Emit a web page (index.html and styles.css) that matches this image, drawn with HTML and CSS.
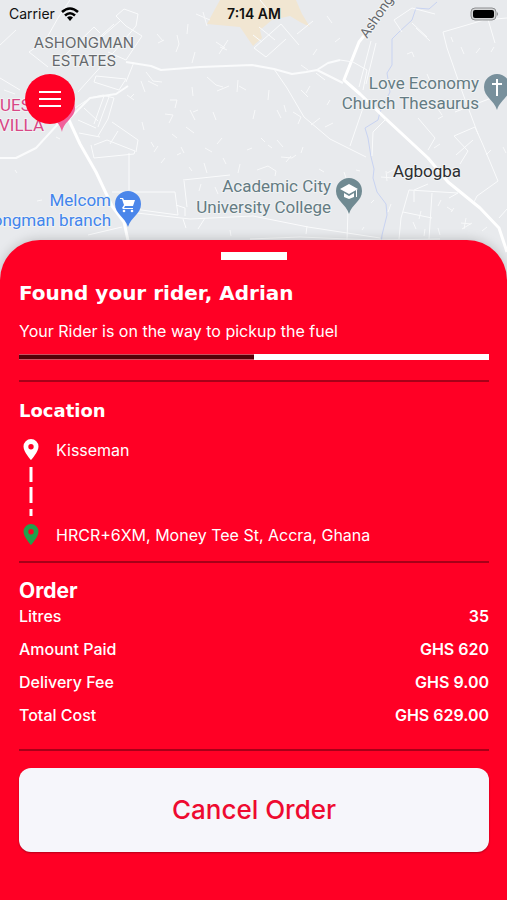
FILE: index.html
```
<!DOCTYPE html>
<html lang="en">
<head>
<meta charset="UTF-8">
<meta name="viewport" content="width=device-width, initial-scale=1">
<title>Your order</title>
<link rel="stylesheet" href="styles.css">
</head>
<body>

<header class="map-area">
    <svg class="map" viewBox="0 0 507 290" preserveAspectRatio="xMidYMin slice" role="img" aria-label="Map">
        <rect width="507" height="290" fill="#e8eaed"/>
        <path fill="#f1e6d2" d="M220 0 215 9 207 24 240 27 253 46 262 38 260 30 272 20 290 16 300 22 310 27 302 14 296 0Z"/>

        <!-- river -->
        <path class="river" d="M437 2 429 9 416 8 412 20 399 32 392 39V65L387 73 390 92 380 112 378 120 365 128 368 138 371 157 374 169 373 178 377 192 386 204 387 215 382 235 381 245"/>

        <!-- main roads -->
        <path class="road big" d="M400-8 376 21 359 42 344 80 360 94 386 119 428 158 448 182 480 208 499 228 507 252"/>
        <path class="road big" d="M68 118 80 144 96 172 112 206 124 222 129 245"/>
        <path class="road mid" d="M0 158H16L36 148 58 124 68 120 90 98 116 94 128 86"/>
        <path class="road mid" d="M126 62 151 66 161 70 200 67 252 65 274 69 292 74 306 72 317 70 331 77 343 83 M317 70 328 63 340 60"/>

        <!-- small streets -->
        <path class="road" d="M108 52 126 60 142 36 126 26 116 16 124 9 138 14 136 26 114 52 78 92 M70 0 58 18 45 41 29 52 48 67 M96 76 126 79 119 90 94 82Z M134 62 126 82 M60 60 94 27 100 33M120 21 96 42 M114 24 92 44 M0 78 20 90"/>
        <path class="road" d="M72 110 90 98 103 95 114 98 108 119 98 136M84 108 98 121M78 120 96 128M104 96 94 124M109 97 98 127 M79 133 100 137M94 145 107 140 135 151 134 154 94 158 91 145 M112 122 138 140 136 152M118 131 110 144M129 153V190"/>
        <path class="road" d="M112 192 175 192 178 215 134 209M176 205 185 208V216M183 180 230 175 M184 181 187 207 M128 212 190 219 253 216 308 227 380 238 M183 219 186 228M205 218 198 229M88 235 122 227 M348 210 347 240M307 226 306 234M250 239 300 237 348 239 382 240 440 239"/>
        <path class="road" d="M274 69 287 88 304 117 330 139 366 157 M325 80 316 73 M340 60 353 62 367 70 363 90 M371 41 359 87 M376 43 366 84M364 105 350 146M386 119 373 132 372 156"/>
        <path class="road" d="M507 18 484 20 443 32 447 48 463 94 478 134M487 16 495 43M412 23 427 37 M402 32 394 20 412 8 435 14M416 28 430 41 M281 24 254 48 266 57 286 39M281 24 299 45M259 27 275 40M253 35 262 42M260 0 270 12M297 34 313 21"/>
        <path class="road" d="M418 118 435 138 428 150M454 136 475 127 483 145 498 181 477 196 474 202M454 136 468 151 460 164M473 140 456 155M409 190 401 218 399 239M409 190 458 193 449 198M403 212 432 218M432 193 429 239M414 191 414 202M428 184 414 190M499 218 507 209M455 112 507 92"/>

        <!-- paths and driveways -->
        <path class="lane" d="M157 34l6 7M158 43l6-3M176 52l3-8-2-9M188 24l-1 10M196 14l14 6M203 12l4 14M216 42l9 6M219 54l9-14M220 47l7 3M192 63l3-11M192 87l1 9M141 81l4 11M146 72l7 9 9 1 M158 86l-10-5M130 98l4-4M127 95l7 5M207 77l9 8 7 2M217 91l12-5M238 80l-1 12M239 86l7 4M170 100h7l-2 8M165 114l8 1-4 8M190 110l5 10M193 112l5-2M213 112l3 8"/>
        <path class="lane" d="M0 45l16-15M4 90l11 4M15 170l2 3M37 201l5-1M56 137l4 2M142 122l2 8M151 142l3 5M158 146l-4 6M165 158l-4 5M172 134l5 4M186 127l8 6M181 147l3 6M177 155l4-2M205 148l7 4M204 163l3 10M189 167l3 4M217 144l5-6M223 158l3 6M240 164l-2 9M247 150l5-2M221 190l4-2M201 184l-2 7M215 187l3 7M230 230l1 6"/>
        <path class="lane" d="M257 170l11-4 8 5-1 5M268 145l4 3M277 140l6 7M281 157l11 1 4-3M286 162l5-6M261 138l4 4M301 153l2-6M319 169l5 3M293 112l8 5-3 7M311 125l9-7M325 127l8-4M330 100l-3 5M306 93l4-7M277 110l4 8M301 90l7 7M269 90l-1 10M284 105l2 7M255 110l-2 9M344 172l2 6M356 170l4 1M381 177l12 1M386 171l1 10M395 169l-8 4M374 200l-3 3M362 230l2-3M391 204l-3 8"/>
        <path class="lane" d="M407 54l5-2 2 5M453 42l-2-5M461 47l3 7M480 48l-4 5M491 52l3-5M427 74l3 7M438 109l4 6M438 119l5-3M440 144l-6 4M491 150l-5 5M503 147l3 6M447 207l6 4M451 212l3-4M461 223l10 1M466 218l-2 11M462 229l10-6M487 227l-5 4M438 228l2 7M413 222l3 7M421 211l-2 8M425 229l-1 7M441 200l-3 6M327 16l5 7M340 38l-5 4M301 65l7 5M317 49l-4 6"/>

        <!-- labels -->
        <g class="area">
            <text x="84" y="48">ASHONGMAN</text>
            <text x="84" y="66">ESTATES</text>
        </g>
        <text class="street" transform="translate(367 39) rotate(-56)">Ashongman</text>
        <g class="place lodge">
            <text x="41" y="111">GUEST</text>
            <text x="44" y="131">VILLA</text>
        </g>
        <g class="place church">
            <text x="479" y="89">Love Economy</text>
            <text x="479" y="109">Church Thesaurus</text>
        </g>
        <g class="place church">
            <text x="331" y="192">Academic City</text>
            <text x="331" y="213">University College</text>
        </g>
        <g class="place shop">
            <text x="111" y="206">Melcom</text>
            <text x="111" y="226">Ashongman branch</text>
        </g>
        <text class="town" x="427" y="177">Agbogba</text>

        <!-- pins, each drawn with its tip at 0,0 -->
        <path transform="translate(62 132)" fill="#f0609a" d="M0 0C-2-11-13-14-13-24A13 13 0 0 1 13-24C13-14 2-11 0 0Z"/>
        <g transform="translate(497 110)">
            <path fill="#78909c" d="M0 0C-3-10-13-13-13-23A13 13 0 0 1 13-23C13-13 3-10 0 0Z"/>
            <path fill="none" stroke="#fff" stroke-width="2" d="M0-31V-14M-5-26H5"/>
        </g>
        <g transform="translate(349 214)">
            <path fill="#708a92" d="M0 0C-3-10-13-13-13-23A13 13 0 0 1 13-23C13-13 3-10 0 0Z"/>
            <path fill="#fff" d="M0-30 9-25 0-20-9-25ZM-5-21 0-18 5-21V-17L0-15-5-17ZM7-24H8V-17H7Z"/>
        </g>
        <g transform="translate(128 227)">
            <path fill="#4b86ea" d="M0 0C-3-10-13-13-13-23A13 13 0 0 1 13-23C13-13 3-10 0 0Z"/>
            <path fill="#fff" d="M-8-29H-5L-4-27H7L5-21H-3L-4-19H5V-18H-5L-6-19-4-22-6-28H-8Z"/>
            <circle cx="-4" cy="-16" r="1.300" fill="#fff"/>
            <circle cx="4" cy="-16" r="1.300" fill="#fff"/>
        </g>
    </svg>

    <div class="status-bar">
        <div class="carrier">
            <span>Carrier</span>
            <svg width="18" height="14" viewBox="0 0 18 14" aria-hidden="true">
                <g fill="none" stroke="#000" stroke-width="2.600">
                    <path d="M1 5Q9-2 17 5"/>
                    <path d="M4 8.500Q9 4 14 8.500"/>
                </g>
                <path d="M6 10.500Q9 8 12 10.500L9 14Z"/>
            </svg>
        </div>
        <time>7:14 AM</time>
        <svg class="battery" width="29" height="14" viewBox="0 0 29 14" aria-hidden="true">
            <rect x="1" y="1" width="25" height="12" rx="4" fill="#d4d5d6" stroke="#8e8f91" stroke-width="1"/>
            <rect x="3" y="3" width="21" height="8" rx="2"/>
            <path fill="#8e8f91" d="M27 5Q29 7 27 9Z"/>
        </svg>
    </div>

    <button class="menu" type="button" aria-label="Menu">
        <svg width="24" height="18" viewBox="0 0 24 18" aria-hidden="true">
            <path fill="none" stroke="#fff" stroke-width="2" d="M1 2H23M1 9H23M1 16H23"/>
        </svg>
    </button>
</header>

<main class="sheet">
    <div class="handle"></div>

    <section class="rider">
        <h1>Found your rider, Adrian</h1>
        <p id="rider-status">Your Rider is on the way to pickup the fuel</p>
        <progress value="50" max="100" aria-labelledby="rider-status"></progress>
    </section>

    <section class="location">
        <h2>Location</h2>
        <div class="stop">
            <svg class="pin" width="16" height="22" viewBox="0 0 16 22" aria-hidden="true">
                <path fill="currentColor" fill-rule="evenodd" d="M8 0A7.500 7.500 0 0 0 .500 7.500C.500 13 8 21 8 21S15.500 13 15.500 7.500A7.500 7.500 0 0 0 8 0ZM8 5A2.700 2.700 0 1 1 8 10.400 2.700 2.700 0 0 1 8 5Z"/>
            </svg>
            <span>Kisseman</span>
        </div>
        <svg class="route" width="24" height="65" viewBox="0 0 24 65" aria-hidden="true">
            <path fill="none" stroke="#fff" stroke-width="3" d="M12 8V23M12 28V44M12 50V57"/>
        </svg>
        <div class="stop stop-end">
            <svg class="pin" width="16" height="22" viewBox="0 0 16 22" aria-hidden="true">
                <path fill="currentColor" fill-rule="evenodd" d="M8 0A7.500 7.500 0 0 0 .500 7.500C.500 13 8 21 8 21S15.500 13 15.500 7.500A7.500 7.500 0 0 0 8 0ZM8 5A2.700 2.700 0 1 1 8 10.400 2.700 2.700 0 0 1 8 5Z"/>
            </svg>
            <span>HRCR+6XM, Money Tee St, Accra, Ghana</span>
        </div>
    </section>

    <section class="order">
        <h2>Order</h2>
        <table>
            <tr><th scope="row">Litres</th><td>35</td></tr>
            <tr><th scope="row">Amount Paid</th><td>GHS 620</td></tr>
            <tr><th scope="row">Delivery Fee</th><td>GHS 9.00</td></tr>
            <tr><th scope="row">Total Cost</th><td>GHS 629.00</td></tr>
        </table>
    </section>

    <button class="cancel" type="button">Cancel Order</button>
</main>

</body>
</html>
```
FILE: styles.css
```
* {
    box-sizing: border-box;
}

body {
    display: flex;
    flex-direction: column;
    min-height: 100vh;
    margin: 0;
    background: #e8eaed;
    color: #fff;
    font-family: Inter, "Liberation Sans", sans-serif;
    font-size: 16px;
    line-height: 20px;
}

h1, h2, p {
    margin: 0;
}

button {
    border: 0;
    font-family: inherit;
    cursor: pointer;
}

/* map */
.map-area {
    position: relative;
    height: 240px;
}

.map {
    position: absolute;
    top: 0;
    left: 0;
    width: 100%;
    height: 290px;
}

.road, .lane, .river {
    fill: none;
    stroke: #fafbfc;
    stroke-width: 1px;
    stroke-linejoin: round;
}

.lane {
    stroke: #f8f9fa;
}

.road.mid {
    stroke-width: 2px;
}

.road.big {
    stroke: #fff;
    stroke-width: 3px;
}

.river {
    stroke: #c8d3f2;
}

.map text {
    font-family: Roboto, "Liberation Sans", sans-serif;
    font-size: 17px;
    stroke: #f1f3f4;
    stroke-width: 2px;
    stroke-linejoin: round;
    paint-order: stroke;
}

.map .area text {
    fill: #66696d;
    font-family: Inter, "Liberation Sans", sans-serif;
    font-size: 15px;
    text-anchor: middle;
}

.map .street {
    fill: #66696d;
    font-size: 14px;
}

.map .place text {
    text-anchor: end;
}

.map .lodge text {
    fill: #d84886;
}

.map .church text {
    fill: #647b83;
}

.map .shop text {
    fill: #4285ed;
}

.map .town {
    fill: #2c2d30;
    text-anchor: middle;
}

/* status bar */
.status-bar {
    position: relative;
    display: grid;
    grid-template-columns: 1fr auto 1fr;
    align-items: center;
    height: 28px;
    padding: 0 8px 0 9px;
    color: #111;
    font-size: 14px;
}

.carrier {
    display: flex;
    align-items: center;
    gap: 6px;
}

.status-bar time {
    font-weight: 600;
}

.battery {
    justify-self: end;
}

.menu {
    position: relative;
    display: grid;
    place-items: center;
    width: 50px;
    height: 50px;
    margin: 46px 0 0 25px;
    padding: 0;
    border-radius: 50%;
    background: #ff0025;
}

/* bottom sheet */
.sheet {
    position: relative;
    display: flex;
    flex: 1;
    flex-direction: column;
    padding: 12px 18px 48px 19px;
    border-radius: 40px 40px 0 0;
    background: #ff0025;
    box-shadow: 0 0 12px rgba(0, 0, 0, 0.2);
}

.handle {
    align-self: center;
    width: 66px;
    height: 8px;
    background: #fff;
}

.sheet section {
    border-bottom: 2px solid #a80018;
}

.sheet h1, .location h2 {
    font-family: "DejaVu Sans", sans-serif;
    font-weight: bold;
    line-height: 24px;
}

.sheet h1 {
    font-size: 20px;
}

.location h2 {
    font-size: 18px;
}

.rider {
    padding: 21px 0 20px;
}

.rider p {
    margin: 16px 0 13px;
}

.rider progress {
    display: block;
    width: 100%;
    height: 6px;
    border: 0;
    appearance: none;
    background: #fff;
}

.rider progress::-webkit-progress-bar {
    background: #fff;
}

.rider progress::-webkit-progress-value {
    border: solid #c85060;
    border-width: 1px 0;
    background: #540008;
}

.rider progress::-moz-progress-bar {
    background: #540008;
}

.location {
    padding: 17px 0;
}

.location h2 {
    margin-bottom: 16px;
}

.stop {
    display: grid;
    grid-template-columns: 24px 1fr;
    column-gap: 13px;
    align-items: center;
    height: 20px;
}

.pin {
    justify-self: center;
}

.stop-end .pin {
    color: #22a04c;
}

.route {
    display: block;
}

.order {
    padding: 16px 0 0;
}

.order h2 {
    margin-bottom: 3px;
    font-size: 21px;
    font-weight: 700;
    line-height: 24px;
}

.order table {
    width: 100%;
    border-collapse: collapse;
}

.order th, .order td {
    padding: 0 0 13px;
}

.order th {
    font-weight: 500;
    text-align: left;
}

.order td {
    font-weight: 600;
    text-align: right;
}

.order tr:last-child th, .order tr:last-child td {
    padding-bottom: 24px;
}

.cancel {
    margin-top: 17px;
    padding: 26px 16px;
    border-radius: 12px;
    background: #f6f6fb;
    box-shadow: 0 1px 2px rgba(0, 0, 0, 0.3);
    color: #ee0a30;
    font-size: 26px;
    font-weight: 500;
    line-height: 32px;
}
```
